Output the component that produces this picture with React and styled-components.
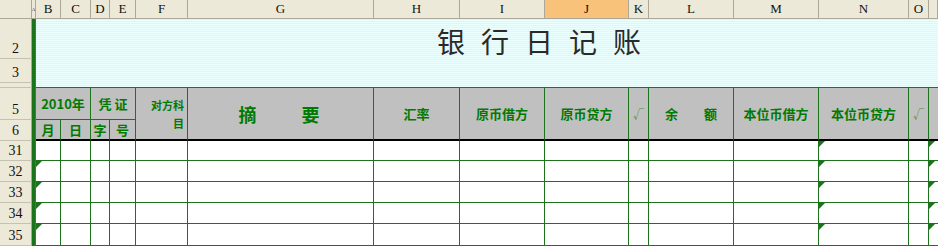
import React from "react";
import styled, { createGlobalStyle, css } from "styled-components";

const GlobalStyle = createGlobalStyle`
  html, body {
    margin: 0;
    padding: 0;
    background: #ffffff;
  }
`;

const GRID = "#1c731c";
const BEIGE = "#ece9d8";
const BEIGE_LINE = "#aca899";

const Sheet = styled.div`
  display: grid;
  grid-template-columns: 32px 4px 25px 30px 19px 26px 52px 186px 86px 85px 84px 20px 85px 85px 90px 20px 1fr;
  grid-template-rows: 19px 40px 24px 5px 32px 21px 20px 21px 21px 21px 22px;
  grid-auto-flow: row dense;
  width: 938px;
  height: 246px;
  overflow: hidden;
  font-family: "Noto Sans CJK SC", "Liberation Sans", sans-serif;
`;

const Corner = styled.div`
  grid-column: 1;
  grid-row: 1;
  background: ${BEIGE};
  border-right: 1px solid ${BEIGE_LINE};
  border-bottom: 1px solid ${BEIGE_LINE};
  box-sizing: border-box;
`;

const ColHead = styled.div`
  display: flex;
  align-items: center;
  justify-content: center;
  overflow: hidden;
  box-sizing: border-box;
  background: ${(p) => (p.$selected ? "#f9c27a" : BEIGE)};
  border-right: 1px solid ${BEIGE_LINE};
  border-bottom: 1px solid ${BEIGE_LINE};
  font-family: "Liberation Serif", "DejaVu Serif", serif;
  font-size: ${(p) => (p.$narrow ? "5px" : "13px")};
  color: #111;
`;

const RowHead = styled.div`
  grid-column: 1;
  display: flex;
  align-items: flex-end;
  justify-content: center;
  padding-bottom: 1px;
  box-sizing: border-box;
  background: ${BEIGE};
  border-right: 1px solid ${BEIGE_LINE};
  border-bottom: 1px solid #c5c2b2;
  font-family: "Liberation Serif", "DejaVu Serif", serif;
  font-size: 14px;
  line-height: 16px;
  color: #111;
`;

const Gutter = styled.div`
  grid-column: 2;
  grid-row: 2 / -1;
  background: #1b741b;
  border-right: 1px solid #2c8a2c;
  box-sizing: border-box;
`;

const Band = styled.div`
  grid-column: 3 / -1;
  grid-row: 2 / 5;
  display: flex;
  align-items: flex-start;
  padding: 8px 0 0 401px;
  box-sizing: border-box;
  border-bottom: 1px solid ${GRID};
  background: repeating-linear-gradient(
    to bottom,
    #cdfdfd 0px,
    #cdfdfd 1px,
    #ebffff 1px,
    #ebffff 2px
  );
`;

const Title = styled.h1`
  margin: 0;
  font-family: "Noto Sans CJK SC", sans-serif;
  font-weight: 400;
  font-size: 28px;
  line-height: 28px;
  letter-spacing: 16px;
  color: #2a2a2a;
  white-space: nowrap;
`;

const HeadCell = styled.div`
  grid-column: ${(p) => p.$col};
  grid-row: ${(p) => p.$row};
  display: flex;
  align-items: center;
  justify-content: ${(p) => p.$justify || "center"};
  box-sizing: border-box;
  background: #c0c0c0;
  border-right: ${(p) => (p.$last ? "none" : `1px solid ${GRID}`)};
  border-bottom: ${(p) => (p.$bottom ? "2px solid #000" : `1px solid ${GRID}`)};
  color: #007a00;
  font-weight: 700;
  font-size: 13px;
  line-height: 16px;
  white-space: nowrap;
`;

const BigLabel = styled.span`
  font-size: 18px;
  letter-spacing: 3px;
`;

const SmallLabel = styled.span`
  font-size: 11px;
  line-height: 18px;
  text-align: right;
  padding-right: 3px;
  white-space: normal;
`;

const Check = styled.span`
  font-weight: 400;
  font-size: 11px;
  color: #4f8a45;
`;

const DataCell = styled.div`
  position: relative;
  box-sizing: border-box;
  background: #fff;
  border-right: ${(p) => (p.$last ? "none" : `1px solid ${GRID}`)};
  border-bottom: 1px solid ${GRID};

  ${(p) =>
    p.$mark &&
    css`
      &::before {
        content: "";
        position: absolute;
        left: 0;
        top: 0;
        border-top: 6px solid #1b741b;
        border-right: 6px solid transparent;
      }
    `}
`;

const columns = ["", "A", "B", "C", "D", "E", "F", "G", "H", "I", "J", "K", "L", "M", "N", "O", ""];
const dataRows = [31, 32, 33, 34, 35];
const bodyCols = columns.slice(2);

export default function App() {
  return (
    <>
      <GlobalStyle />
      <Sheet>
        <Corner />
        {columns.slice(1).map((c, i) => (
          <ColHead key={i} $selected={c === "J"} $narrow={c === "A"}>
            {c}
          </ColHead>
        ))}

        <RowHead>2</RowHead>
        <RowHead>3</RowHead>
        <RowHead />
        <RowHead>5</RowHead>
        <RowHead>6</RowHead>
        {dataRows.map((r) => (
          <RowHead key={r}>{r}</RowHead>
        ))}

        <Gutter />

        <Band>
          <Title>银行日记账</Title>
        </Band>

        <HeadCell $col="3 / 5" $row="5">2010年</HeadCell>
        <HeadCell $col="5 / 7" $row="5">凭 证</HeadCell>
        <HeadCell $col="3" $row="6" $bottom>月</HeadCell>
        <HeadCell $col="4" $row="6" $bottom>日</HeadCell>
        <HeadCell $col="5" $row="6" $bottom>字</HeadCell>
        <HeadCell $col="6" $row="6" $bottom>号</HeadCell>
        <HeadCell $col="7" $row="5 / 7" $bottom $justify="flex-end">
          <SmallLabel>
            对方科
            <br />
            目
          </SmallLabel>
        </HeadCell>
        <HeadCell $col="8" $row="5 / 7" $bottom>
          <BigLabel>摘　　要</BigLabel>
        </HeadCell>
        <HeadCell $col="9" $row="5 / 7" $bottom>汇率</HeadCell>
        <HeadCell $col="10" $row="5 / 7" $bottom>原币借方</HeadCell>
        <HeadCell $col="11" $row="5 / 7" $bottom>原币贷方</HeadCell>
        <HeadCell $col="12" $row="5 / 7" $bottom>
          <Check>√</Check>
        </HeadCell>
        <HeadCell $col="13" $row="5 / 7" $bottom>余　　额</HeadCell>
        <HeadCell $col="14" $row="5 / 7" $bottom>本位币借方</HeadCell>
        <HeadCell $col="15" $row="5 / 7" $bottom>本位币贷方</HeadCell>
        <HeadCell $col="16" $row="5 / 7" $bottom>
          <Check>√</Check>
        </HeadCell>
        <HeadCell $col="17" $row="5 / 7" $bottom $last />

        {dataRows.map((r) =>
          bodyCols.map((c, i) => {
            const last = i === bodyCols.length - 1;
            return (
              <DataCell
                key={`${r}-${i}`}
                $last={last}
                $mark={(c === "B" && r > 31) || c === "N" || last}
              />
            );
          })
        )}
      </Sheet>
    </>
  );
}
